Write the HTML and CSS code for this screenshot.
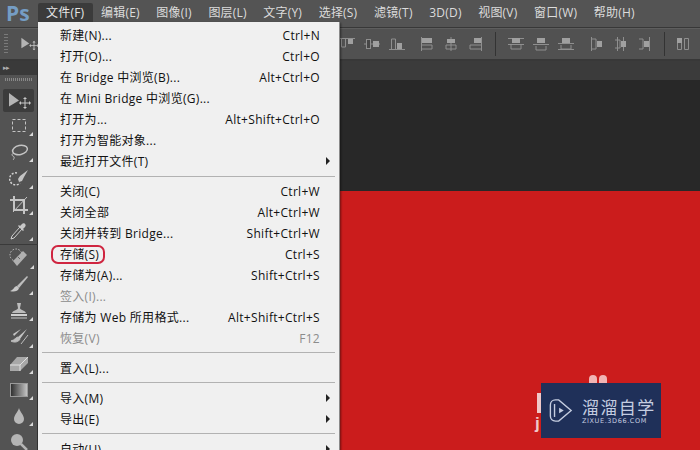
FILE: index.html
```html
<!DOCTYPE html>
<html lang="zh-CN">
<head>
<meta charset="utf-8">
<title>Photoshop</title>
<link rel="stylesheet" href="styles.css">
</head>
<body>
<svg class="defs" width="0" height="0">
  <defs>
    <symbol id="al-t" viewBox="0 0 18 16"><path d="M1 2.500h16M3.500 3v8h4V3" fill="none" stroke="#8f8f8f"/><rect x="10" y="3" width="5" height="5" fill="#a0a0a0"/></symbol>
    <symbol id="al-m" viewBox="0 0 18 16"><path d="M1 8h16" stroke="#8f8f8f"/><rect x="3.500" y="3.500" width="4" height="9" fill="#474747" stroke="#8f8f8f"/><rect x="10" y="5" width="6" height="6" fill="#a0a0a0"/></symbol>
    <symbol id="al-b" viewBox="0 0 18 16"><path d="M1 13.500h16M3.500 13V3h4v10" fill="none" stroke="#8f8f8f"/><rect x="9" y="7" width="5" height="6" fill="#a0a0a0"/></symbol>
    <symbol id="al-l" viewBox="0 0 14 16"><path d="M1.500 1v14M2 9h10v4H2" fill="none" stroke="#8f8f8f"/><rect x="2" y="2" width="10" height="5" fill="#a0a0a0"/></symbol>
    <symbol id="al-c" viewBox="0 0 14 16"><path d="M7 1v14M2 9h10v4H2z" fill="none" stroke="#8f8f8f"/><rect x="3" y="3" width="8" height="4" fill="#a0a0a0"/></symbol>
    <symbol id="al-r" viewBox="0 0 14 16"><path d="M12.500 1v14M12 9H1v4h11" fill="none" stroke="#8f8f8f"/><rect x="5" y="2" width="7" height="5" fill="#a0a0a0"/></symbol>
    <symbol id="d-t" viewBox="0 0 18 14"><path d="M1 1.500h16M1 7.500h16M4 8v4h10V8" fill="none" stroke="#8f8f8f"/><rect x="5" y="1" width="8" height="5" fill="#a0a0a0"/></symbol>
    <symbol id="d-m" viewBox="0 0 18 14"><path d="M1 7.500h16M4 9v4h10V9" fill="none" stroke="#8f8f8f"/><rect x="5" y="1" width="8" height="5" fill="#a0a0a0"/></symbol>
    <symbol id="d-b" viewBox="0 0 18 14"><path d="M1 12.500h16M1 6.500h16M4 8v4h10V8" fill="none" stroke="#8f8f8f"/><rect x="5" y="1" width="8" height="5" fill="#a0a0a0"/></symbol>
    <symbol id="d-l" viewBox="0 0 13 16"><path d="M1.500 1v14M2 3h4v10H2" fill="none" stroke="#8f8f8f"/><rect x="7" y="5" width="5" height="6" fill="#a0a0a0"/></symbol>
    <symbol id="d-c" viewBox="0 0 13 16"><path d="M3.500 1v14M9.500 1v14M1 4h5v8H1" fill="none" stroke="#8f8f8f"/><rect x="7" y="5" width="5" height="6" fill="#a0a0a0"/></symbol>
    <symbol id="d-r" viewBox="0 0 13 16"><path d="M11.500 1v14M1 3h4v10H1" fill="none" stroke="#8f8f8f"/><rect x="6" y="5" width="5" height="6" fill="#a0a0a0"/></symbol>
    <symbol id="grid" viewBox="0 0 13 16"><path d="M1.500 2.500h4v11h-4zM8.500 2.500h4v11h-4z" fill="none" stroke="#8f8f8f"/><rect x="1" y="2" width="5" height="5" fill="#a0a0a0"/></symbol>
    <symbol id="move" viewBox="0 0 26 18"><path d="M3 1l10 7.500-10 6z" fill="#b4b4b4"/><path d="M19 6.500v9M14.500 11h9" stroke="#c8c8c8"/><path d="M19 5l2 2h-4zM19 17l2-2h-4zM13 11l2-2v4zM25 11l-2-2v4z" fill="#c8c8c8"/></symbol>
  </defs>
</svg>
<div class="app">
  <header class="menubar">
    <span class="logo">Ps</span>
    <nav class="menus">
      <span class="menu-item is-open">文件(F)</span>
      <span class="menu-item">编辑(E)</span>
      <span class="menu-item">图像(I)</span>
      <span class="menu-item">图层(L)</span>
      <span class="menu-item">文字(Y)</span>
      <span class="menu-item">选择(S)</span>
      <span class="menu-item">滤镜(T)</span>
      <span class="menu-item">3D(D)</span>
      <span class="menu-item">视图(V)</span>
      <span class="menu-item">窗口(W)</span>
      <span class="menu-item">帮助(H)</span>
    </nav>
  </header>
  <div class="optionsbar">
    <span class="grip"></span>
    <svg class="opt-move"><use href="#move"/></svg>
    <div class="aligns">
      <svg class="ic18"><use href="#al-t"/></svg>
      <svg class="ic18"><use href="#al-m"/></svg>
      <svg class="ic18"><use href="#al-b"/></svg>
      <svg class="ic14 gap-l"><use href="#al-l"/></svg>
      <svg class="ic14"><use href="#al-c"/></svg>
      <svg class="ic14"><use href="#al-r"/></svg>
      <span class="vsep"></span>
      <svg class="ic18"><use href="#d-t"/></svg>
      <svg class="ic18"><use href="#d-m"/></svg>
      <svg class="ic18"><use href="#d-b"/></svg>
      <svg class="ic13 gap-l2"><use href="#d-l"/></svg>
      <svg class="ic13"><use href="#d-c"/></svg>
      <svg class="ic13"><use href="#d-r"/></svg>
      <span class="vsep"></span>
      <svg class="ic13"><use href="#grid"/></svg>
    </div>
  </div>
  <div class="workspace">
    <aside class="toolbar">
      <div class="collapse">▸▸</div>
      <div class="tgrip"></div>
      <div class="tool active"><svg class="ticon-move"><use href="#move"/></svg></div>
      <div class="tool more"><svg viewBox="0 0 20 20"><rect x="3.500" y="3.500" width="13" height="12" fill="none" stroke="#c4c4c4" stroke-dasharray="3 2"/></svg></div>
      <div class="tool more"><svg viewBox="0 0 20 20"><ellipse cx="11" cy="8" rx="7.500" ry="4.500" fill="none" stroke="#c4c4c4" stroke-width="1.500" transform="rotate(-12 11 8)"/><path d="M5 11c-2 1-3 2-1 3s1 3 0 4" fill="none" stroke="#c4c4c4"/></svg></div>
      <div class="tool more"><svg viewBox="0 0 20 20"><path d="M8 5a6 6 0 1 0 3 10" fill="none" stroke="#d0d0d0" stroke-dasharray="2 1.500" stroke-width="1.500"/><path d="M19 2L11 8l-2 3 1 3 3-1 2-4z" fill="#c4c4c4"/></svg></div>
      <div class="tool more"><svg viewBox="0 0 20 20"><path d="M5 1v14h14M1 5h14v14" fill="none" stroke="#c4c4c4" stroke-width="2"/><path d="M4 17L18 2" stroke="#c4c4c4"/></svg></div>
      <div class="tool more"><svg viewBox="0 0 20 20"><path d="M11 6L3 15l-1 3 3-1 8-9z" fill="#4c4c4c" stroke="#d0d0d0"/><path d="M11 5l2-2c2-2 5 1 3 3l-2 2 1 1-1 1-5-5 1-1z" fill="#c8c8c8"/></svg></div>
      <div class="tool more tool-sep"><svg viewBox="0 0 20 20"><circle cx="7" cy="7" r="6" fill="none" stroke="#c4c4c4" stroke-dasharray="1.500 1.500"/><path d="M4 13l10-10 4 4L8 18z" fill="#b0b0b0"/><path d="M9 9l2 2" stroke="#666"/></svg></div>
      <div class="tool more"><svg viewBox="0 0 20 20"><path d="M18 1L8 11l2 2 9-11z" fill="#bdbdbd"/><path d="M8 11c-3 0-3 4-7 5 3 1 8 1 9-3z" fill="#c8c8c8"/></svg></div>
      <div class="tool more"><svg viewBox="0 0 20 20"><path d="M8 2h4l-1 5c0 2 5 2 6 5H3c1-3 6-3 6-5z" fill="#bdbdbd"/><rect x="2" y="13" width="16" height="2" fill="#d0d0d0"/><rect x="2" y="16" width="16" height="2" fill="#8c8c8c"/></svg></div>
      <div class="tool more"><svg viewBox="0 0 20 20"><path d="M18 2L9 10l2 2zM12 2L4 7l1 2z" fill="#c4c4c4"/><path d="M9 10c-2 0-3 3-7 4 3 2 8 1 9-2zM19 8l-7 9" fill="#bdbdbd" stroke="#bdbdbd"/></svg></div>
      <div class="tool more"><svg viewBox="0 0 20 20"><path d="M8 3h11v6l-8 8H1v-6z" fill="#a8a8a8"/><path d="M1 11h10l8-8" fill="none" stroke="#e0e0e0"/><path d="M11 11v6" stroke="#e0e0e0"/></svg></div>
      <div class="tool more"><svg viewBox="0 0 20 20"><defs><linearGradient id="grad"><stop offset="0" stop-color="#2c2c2c"/><stop offset="1" stop-color="#c8c8c8"/></linearGradient></defs><rect x="1.500" y="3.500" width="17" height="13" fill="url(#grad)" stroke="#9a9a9a"/></svg></div>
      <div class="tool more"><svg viewBox="0 0 20 20"><path d="M10 2c1 4 5 7 5 11a5 5 0 0 1-10 0c0-4 4-7 5-11z" fill="#b8b8b8"/></svg></div>
      <div class="tool"><svg viewBox="0 0 20 20"><circle cx="8" cy="8" r="6" fill="#b4b4b4"/><path d="M12 12l6 6" stroke="#b4b4b4" stroke-width="2.500"/></svg></div>
    </aside>
    <main class="stage">
      <div class="tabstrip"></div>
      <div class="pasteboard"></div>
      <div class="canvas"></div>
    </main>
  </div>

  <div class="filemenu">
    <div class="row"><span>新建(N)...</span><span>Ctrl+N</span></div>
    <div class="row"><span>打开(O)...</span><span>Ctrl+O</span></div>
    <div class="row"><span>在 Bridge 中浏览(B)...</span><span>Alt+Ctrl+O</span></div>
    <div class="row"><span>在 Mini Bridge 中浏览(G)...</span></div>
    <div class="row"><span>打开为...</span><span>Alt+Shift+Ctrl+O</span></div>
    <div class="row"><span>打开为智能对象...</span></div>
    <div class="row sub"><span>最近打开文件(T)</span></div>
    <div class="sep"></div>
    <div class="row"><span>关闭(C)</span><span>Ctrl+W</span></div>
    <div class="row"><span>关闭全部</span><span>Alt+Ctrl+W</span></div>
    <div class="row"><span>关闭并转到 Bridge...</span><span>Shift+Ctrl+W</span></div>
    <div class="row"><span class="circled">存储(S)</span><span>Ctrl+S</span></div>
    <div class="row"><span>存储为(A)...</span><span>Shift+Ctrl+S</span></div>
    <div class="row off"><span>签入(I)...</span></div>
    <div class="row"><span>存储为 Web 所用格式...</span><span>Alt+Shift+Ctrl+S</span></div>
    <div class="row off"><span>恢复(V)</span><span>F12</span></div>
    <div class="sep sep-up"></div>
    <div class="row"><span>置入(L)...</span></div>
    <div class="sep sep-up"></div>
    <div class="row sub"><span>导入(M)</span></div>
    <div class="row sub"><span>导出(E)</span></div>
    <div class="sep sep-up"></div>
    <div class="row sub"><span>自动(U)</span></div>
  </div>

  <div class="behind-mark">
    <span class="bump"></span><span class="bump"></span>
  </div>
  <div class="behind-bar"></div>
  <div class="behind-j">j</div>
  <div class="watermark">
    <svg class="wm-logo" viewBox="0 0 26 26"><path d="M7 1.500h3.500L24 13 10.500 24.500H7C3.500 24.500 1.500 22 1.500 19V7C1.500 4 3.500 1.500 7 1.500z" fill="none" stroke="#c5cde0" stroke-width="1.500"/><path d="M6 6v14" stroke="#c5cde0" stroke-width="1.500"/><path d="M11 10l5 3-5 3z" fill="#c5cde0"/></svg>
    <div class="wm-text">
      <div class="wm-cn">溜溜自学</div>
      <div class="wm-en">ZIXUE.3D66.COM</div>
    </div>
  </div>
</div>
</body>
</html>
```
FILE: styles.css
```css
* { box-sizing: border-box; }
html, body { margin: 0; padding: 0; }
body { width: 700px; height: 450px; overflow: hidden; background: #535353; font-family: "Open Sans", "Noto Sans CJK SC", sans-serif; }
.defs { position: absolute; }
.app { position: relative; width: 700px; height: 450px; display: flex; flex-direction: column; overflow: hidden; }

.menubar { height: 28px; flex: none; display: flex; background: #545454; border-bottom: 1px solid #383838; }
.logo { width: 38px; padding: 1px 0 0 6px; font: bold 21px/24px "Open Sans", sans-serif; color: #759dc4; }
.menus { display: flex; padding-top: 3px; }
.menu-item { height: 19px; font-size: 12px; line-height: 19px; color: #dcdcdc; padding: 0 8px; margin-right: .6px; white-space: nowrap; letter-spacing: .2px; }
.menu-item.is-open { background: #3b3b3b; color: #e6e6e6; width: 55px; border-radius: 2px 2px 0 0; margin-right: 0; }

.optionsbar { height: 33px; flex: none; display: flex; align-items: center; background: #515151; border-bottom: 2px solid #383838; border-top: 1px solid #5e5e5e; }
.grip { width: 5px; height: 20px; margin-left: 4px; background: repeating-linear-gradient(#7a7a7a 0 1px, transparent 1px 3px); }
.opt-move { width: 26px; height: 18px; margin-left: 11px; }
.aligns { display: flex; align-items: center; margin-left: 298px; }
.ic18 { width: 18px; height: 16px; margin-right: 7px; }
.ic14 { width: 14px; height: 16px; margin-right: 10.500px; }
.ic13 { width: 13px; height: 16px; margin-right: 11px; }
.gap-l { margin-left: 7px; }
.gap-l2 { margin-left: 8px; }
.vsep { width: 1px; height: 24px; background: #333; margin: 0 11px 0 2px; }

.workspace { flex: 1; display: flex; min-height: 0; }
.toolbar { width: 38px; flex: none; background: #535353; border-right: 1px solid #333; display: flex; flex-direction: column; align-items: center; }
.collapse { width: 100%; height: 14px; flex: none; background: #3a3a3a; color: #b0b0b0; font-size: 7px; line-height: 13px; padding-left: 3px; letter-spacing: -1px; }
.tgrip { width: 28px; height: 3px; flex: none; margin: 3px 0 8px; background: repeating-linear-gradient(90deg, #888 0 1px, transparent 1px 2px); }
.tool { position: relative; width: 31px; height: 26.200px; flex: none; display: flex; align-items: center; justify-content: center; }
.tool svg { width: 20px; height: 20px; }
.tool.active { height: 23px; margin-bottom: 1px; background: #3c3c3c; border-radius: 2px; }
.tool.active .ticon-move { width: 26px; height: 18px; }
.tool.more::after { content: ""; position: absolute; right: 1px; bottom: 3px; border-style: solid; border-width: 0 0 4px 4px; border-color: transparent transparent #d8d8d8 transparent; }
.tool-sep { border-top: 1px solid #3a3a3a; width: 38px; height: 28px; }
.tool-sep::after { right: 4px !important; }

.stage { flex: 1; display: flex; flex-direction: column; }
.tabstrip { height: 19px; flex: none; background: #3b3b3b; }
.pasteboard { height: 111px; flex: none; background: #282828; }
.canvas { flex: 1; background: #cb1c1c; }

.filemenu { position: absolute; left: 38px; top: 22px; width: 302px; height: 440px; padding-top: 3px; background: #f0f0f0; border-right: 1px solid #8a8a8a; box-shadow: 1px 1px 2px rgba(0,0,0,.45); }
.row { position: relative; height: 21px; display: flex; justify-content: space-between; align-items: center; padding: 0 19px 0 22px; font-size: 12px; line-height: 17px; color: #111; white-space: nowrap; letter-spacing: .3px; }
.row.off { color: #8c8c8c; }
.row.sub::after { content: ""; position: absolute; right: 9px; top: 6px; border-style: solid; border-width: 4px 0 4px 4px; border-color: transparent transparent transparent #222; }
.sep { height: 1px; margin: 4px; background: #b2b2b2; }
.sep-up { margin-top: 3px; margin-bottom: 5px; }
.circled { position: relative; }
.circled::after { content: ""; position: absolute; left: -9px; right: -6px; top: -1px; bottom: -1px; border: 2px solid #cf2540; border-radius: 7px; }

.behind-mark { position: absolute; left: 589px; top: 375px; display: flex; gap: 2px; }
.bump { width: 8px; height: 12px; border-radius: 4px; background: #f0b4b4; }
.behind-bar { position: absolute; left: 537px; top: 393px; width: 6px; height: 20px; background: #f0c8c8; }
.behind-j { position: absolute; left: 535px; top: 414px; font: bold 17px/20px "Liberation Sans", sans-serif; color: #f0c8c8; }

.watermark { position: absolute; left: 541px; top: 383px; width: 120px; height: 55px; background: #1f3059; display: flex; align-items: center; padding-left: 8px; gap: 9px; }
.wm-logo { width: 24px; height: 25px; flex: none; }
.wm-text { display: flex; flex-direction: column; color: #c5cde0; }
.wm-cn { font: 17px/19px "Noto Sans CJK SC", sans-serif; letter-spacing: 1.400px; }
.wm-en { font: 6.500px/8px "DejaVu Sans", sans-serif; letter-spacing: .6px; margin-top: 1px; white-space: nowrap; }
```
